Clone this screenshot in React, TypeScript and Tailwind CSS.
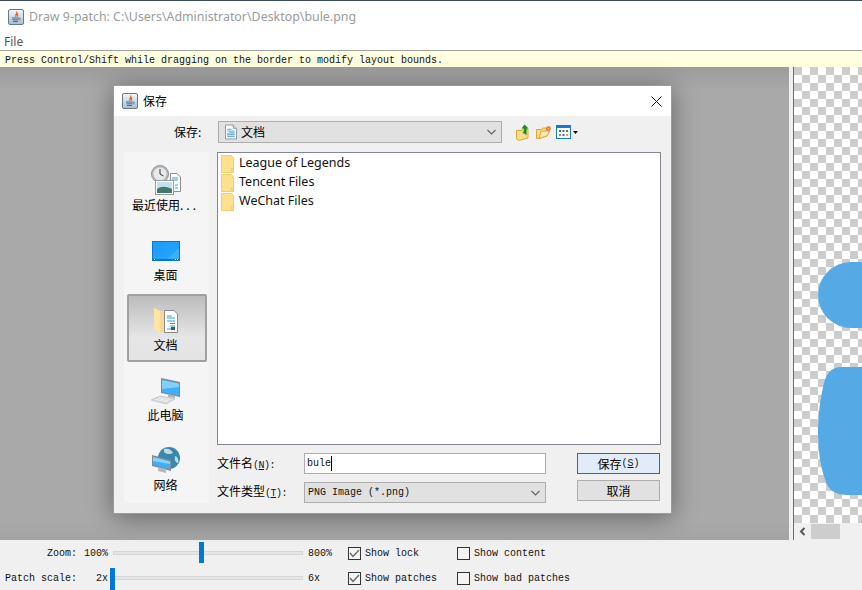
import React from "react";

const mono = "font-['Liberation_Mono',monospace] text-[10px] text-[#111]";
const cjk = "font-['Noto_Sans_CJK_SC','Noto_Sans',sans-serif] text-[12px] text-black";

function JavaIcon() {
  return (
    <svg width="16" height="16" viewBox="0 0 16 16">
      <defs>
        <linearGradient id="javaBg" x1="0" y1="0" x2="0" y2="1">
          <stop offset="0" stopColor="#f4f7fa" />
          <stop offset="1" stopColor="#a9bdd0" />
        </linearGradient>
      </defs>
      <rect x="0.5" y="0.5" width="15" height="15" rx="1.5" fill="url(#javaBg)" stroke="#66788c" />
      <path d="M8.5 2.5C10 4.5 6.5 5.5 8 8M10 4.5C9 5.5 9 6.5 10 7.5" fill="none" stroke="#e0661c" strokeWidth="1.2" />
      <path d="M4 9h7M4.5 10.8h6M5 12.5h5" stroke="#3a6ea5" strokeWidth="1" />
      <path d="M11 9.2c2 -.4 2 1.6 0 1.8" fill="none" stroke="#3a6ea5" strokeWidth=".8" />
    </svg>
  );
}

function DocIcon() {
  return (
    <svg width="12" height="16" viewBox="0 0 13 16">
      <path d="M.5.5H9L12.5 4V15.5H.5Z" fill="#fff" stroke="#8a8f96" />
      <path d="M9 .5V4H12.5" fill="#dfe3e8" stroke="#8a8f96" />
      <path d="M2.5 5H7M2.5 7H10.5M2.5 13H10.5" stroke="#2f9fdc" />
      <path d="M4.5 9H10.5M4.5 11H10.5" stroke="#2f7fb0" />
      <rect x="2.5" y="9" width="1.5" height="3" fill="#5a9fc8" />
    </svg>
  );
}

function FileFolder() {
  return (
    <svg width="13" height="18" viewBox="0 0 13 18">
      <path d="M.5 .5H10.5L12.5 3V13.5H10.5V17.5H.5Z" fill="#fde08e" stroke="#f0cf74" />
      <path d="M10.5 13.5H12.5V17.5H10.5Z" fill="#f7d87f" stroke="#f0cf74" />
    </svg>
  );
}

function ToolIcons() {
  return (
    <div className="flex items-center ml-[14px]">
      <svg width="15" height="17" viewBox="0 0 15 17">
        <path d="M.5 6.5H6L6.5 5H12V14L3 16.5L.5 15Z" fill="#f8dc86" stroke="#d6a83a" />
        <path d="M8.5 .5L12.5 4.5H10.5V11.5C9.5 10 8 9 6.5 9C8 8 8 6 8 4.5H5.5Z" fill="#1b8a1f" />
      </svg>
      <svg className="ml-[5px]" width="16" height="13" viewBox="0 0 16 13">
        <path d="M.5 3.5H5.5L6.5 2H11V10L3 12.5H.5Z" fill="#f8dc86" stroke="#d6a83a" />
        <path d="M11 10L14 5H5L3 12.5Z" fill="#fbe7a6" stroke="#d6a83a" />
        <circle cx="12.5" cy="2.5" r="2.3" fill="#f0603a" />
        <circle cx="12.5" cy="2.5" r="1" fill="#fbd15e" />
      </svg>
      <svg className="ml-[4px]" width="15" height="14" viewBox="0 0 15 14">
        <rect x=".5" y=".5" width="14" height="13" fill="#fff" stroke="#1979ca" />
        <rect x="0" y="0" width="15" height="3" fill="#1979ca" />
        <rect x="3" y="5" width="2" height="2" fill="#1979ca" />
        <rect x="6.5" y="5" width="2" height="2" fill="#666" />
        <rect x="10" y="5" width="2" height="2" fill="#2c9a3c" />
        <rect x="3" y="9" width="2" height="2" fill="#e8722c" />
        <rect x="6.5" y="9" width="2" height="2" fill="#1979ca" />
        <rect x="10" y="9" width="2" height="2" fill="#e0a82c" />
      </svg>
      <svg className="ml-[2px]" width="5" height="3" viewBox="0 0 5 3">
        <path d="M0 0H5L2.5 3Z" fill="#111" />
      </svg>
    </div>
  );
}

function Chevron() {
  return (
    <svg width="9" height="6" viewBox="0 0 9 6" className="shrink-0">
      <path d="M.5 1L4.5 5L8.5 1" fill="none" stroke="#606060" strokeWidth="1.1" />
    </svg>
  );
}

function RecentIcon() {
  return (
    <svg width="30" height="30" viewBox="0 0 30 30">
      <circle cx="9" cy="9" r="8.5" fill="#b9bdc0" stroke="#8c9094" />
      <circle cx="9" cy="9" r="6.5" fill="#e8e9ea" />
      <path d="M9 4V9L12.5 11" fill="none" stroke="#333" strokeWidth="1" />
      <path d="M19.5 8.500H26L29.500 12V26.500H19.500Z" fill="#fff" stroke="#8a8f96" />
      <path d="M21 13H27M21 15H27M24 20H27M24 23H27" stroke="#2f9fdc" />
      <rect x="4.500" y="15.500" width="18" height="14" fill="#fff" stroke="#9a9a9a" />
      <rect x="6" y="17" width="15" height="11" fill="#bfe0ee" />
      <path d="M6 24C10 21 14 21 21 24V28H6Z" fill="#3f7a6a" />
    </svg>
  );
}

function DesktopIcon() {
  return (
    <svg width="28" height="20" viewBox="0 0 28 20">
      <defs>
        <linearGradient id="deskBg" x1="0" y1="0" x2="1" y2="1">
          <stop offset="0" stopColor="#1a9bff" />
          <stop offset="1" stopColor="#27a5ff" />
        </linearGradient>
      </defs>
      <rect x=".5" y=".5" width="27" height="19" fill="url(#deskBg)" stroke="#0a78c4" />
      <path d="M14 19L27 7V19Z" fill="#4cb6ff" opacity=".6" />
      <rect x="1" y="18" width="26" height="1" fill="#0e6fb3" />
      <path d="M2 18.500H3M23 18.500H24M25 18.500H26" stroke="#fff" />
    </svg>
  );
}

function DocsIcon() {
  return (
    <svg width="24" height="27" viewBox="0 0 24 27">
      <path d="M0 0L6 3H16V24H7L0 20Z" fill="#f7da95" />
      <path d="M0 0L6 3V27L0 21Z" fill="#fbe6a8" />
      <path d="M10.500 2.500H20L23.500 6V24.500H10.500Z" fill="#fff" stroke="#85898f" />
      <path d="M13 8H18M13 10H21M13 13H21M16 15.500H21M16 18H21M13 21H21" stroke="#2f9fdc" />
      <rect x="17" y="19" width="4" height="3" fill="#555" />
    </svg>
  );
}

function PcIcon() {
  return (
    <svg width="30" height="27" viewBox="0 0 30 27">
      <path d="M10 0L29 4V19L10 15Z" fill="#7d8a94" />
      <path d="M11 2L28 5.500V17.500L11 14Z" fill="#3fb0f8" />
      <path d="M11 2L28 5.500V9L11 11Z" fill="#7fd0fc" />
      <path d="M17 16L24 17.500V20L17 19Z" fill="#aab2b8" />
      <path d="M0 22L9 18L24 21L15 26Z" fill="#d5d9dc" stroke="#b4b8bc" strokeWidth=".6" />
      <path d="M4 21.500L16 24M6 20.500L18 23M8 19.500L20 22" stroke="#f4f5f6" strokeWidth=".7" />
    </svg>
  );
}

function NetIcon() {
  return (
    <svg width="28" height="28" viewBox="0 0 28 28">
      <circle cx="17" cy="11" r="11" fill="#3b86ad" />
      <path d="M12 2C16 1 20 3 21 6C18 8 14 7 12 5ZM23 9C26 10 27 13 26 16C24 16 22 13 23 9Z" fill="#bcdcec" />
      <path d="M0 8L19 13V24L0 19Z" fill="#7d8a94" />
      <path d="M1 10L18 14.500V22L1 17.500Z" fill="#3fb0f8" />
      <path d="M1 10L18 14.500V17L1 14Z" fill="#86d3fc" />
      <path d="M6 20L14 22V26L6 24Z" fill="#b4bac0" />
    </svg>
  );
}

function SideItem({ icon, label, selected, iconClass }: { icon: React.ReactNode; label: React.ReactNode; selected?: boolean; iconClass: string }) {
  return (
    <div className="relative h-[70px] flex justify-center pr-[2px]">
      {selected && (
        <div className="absolute left-[3px] right-[2px] top-[0px] h-[68px] rounded-[2px] border-2 border-[#a0a0a0] bg-[linear-gradient(#bcbcbc,#e6e6e6_65%,#e4e4e4)]" />
      )}
      <div className={"relative flex flex-col items-center " + iconClass}>
        {icon}
      </div>
      <span className={"absolute top-[42px] whitespace-nowrap leading-[18px] " + cjk}>{label}</span>
    </div>
  );
}

function Check({ on }: { on?: boolean }) {
  return (
    <span className="w-[13px] h-[13px] border border-[#333] bg-[#f4f4f4] flex items-center justify-center shrink-0">
      {on && (
        <svg width="11" height="9" viewBox="0 0 11 9">
          <path d="M1 4L4 7.500L10 1" fill="none" stroke="#666" strokeWidth="1.3" />
        </svg>
      )}
    </span>
  );
}

function Option({ on, label, className }: { on?: boolean; label: string; className: string }) {
  return (
    <div className={"flex items-center gap-[4px] pt-[2px] " + className}>
      <Check on={on} />
      <span className={mono}>{label}</span>
    </div>
  );
}

function Slider({ thumbLeft, thumbClass }: { thumbLeft: number; thumbClass: string }) {
  return (
    <div className="relative w-[190px] h-full flex items-center">
      <div className="w-full h-[4px] bg-[#e6e6e6] border border-[#d6d6d6]" />
      <div className={"absolute w-[5px] bg-[#0078d7] " + thumbClass} style={{ left: thumbLeft }} />
    </div>
  );
}

export default function App() {
  return (
    <div className="relative w-[862px] h-[590px] overflow-hidden flex flex-col bg-[#f0f0f0]">
      <div className="h-[33px] bg-white border-t border-[#3c4a55] flex items-center pl-[8px] gap-[5px] shrink-0">
        <JavaIcon />
        <span className="font-['Noto_Sans',sans-serif] text-[12.4px] text-[#9b9b9b]">Draw 9-patch: C:\Users\Administrator\Desktop\bule.png</span>
      </div>
      <div className="h-[17px] bg-white pl-[4px] flex items-center shrink-0">
        <span className="font-['Noto_Sans',sans-serif] text-[12px] text-[#555]">File</span>
      </div>
      <div className="h-[17px] bg-[#ffffe0] border-t border-[#a0a0a0] pl-[5px] pt-[2px] flex items-center shrink-0">
        <span className={mono}>Press Control/Shift while dragging on the border to modify layout bounds.</span>
      </div>

      <div className="h-[473px] flex shrink-0">
        <div className="w-[789px] bg-[linear-gradient(#9c9c9c,#a9a9a9_5%,#a9a9a9_96%,#a4a4a4)]" />
        <div className="w-[4px] bg-[#f0f0f0] border-r border-[#6e6e6e] box-content" />
        <div className="flex-1 flex flex-col">
          <div className="relative flex-1 overflow-hidden bg-[repeating-conic-gradient(#ffffff_0_25%,#cccccc_0_50%)] bg-[length:16px_16px]">
            <div className="absolute left-[24px] top-[195px] w-[60px] h-[66px] bg-[#55a9e4] rounded-l-[33px]" />
            <svg className="absolute left-[24px] top-[300px]" width="45" height="128" viewBox="0 0 45 128">
              <path d="M45 0H24C12 0 8 8 6 16C2 32 0 50 0 64C0 82 2 98 7 112C10 124 18 128 30 128H45Z" fill="#55a9e4" />
            </svg>
          </div>
          <div className="h-[17px] bg-[#f0f0f0] flex items-center shrink-0">
            <svg className="ml-[5px]" width="7" height="9" viewBox="0 0 7 9">
              <path d="M5.500 1L2 4.500L5.500 8" fill="none" stroke="#555" strokeWidth="2" />
            </svg>
            <div className="ml-[5px] w-[29px] h-[15px] bg-[#cdcdcd]" />
          </div>
        </div>
      </div>

      <div className="flex-1 flex flex-col">
        <div className="h-[25px] flex items-center relative">
          <span className={"w-[84px] pl-[47px] pt-[2px] " + mono}>Zoom:</span>
          <span className={"w-[29px] pt-[2px] " + mono}>100%</span>
          <div className="h-[25px]"><Slider thumbLeft={86} thumbClass="top-[2px] h-[21px]" /></div>
          <span className={"w-[45px] pl-[5px] pt-[2px] " + mono}>800%</span>
          <Option on label="Show lock" className="w-[109px]" />
          <Option label="Show content" className="" />
        </div>
        <div className="h-[25px] flex items-center relative">
          <span className={"w-[96px] pl-[5px] pt-[2px] " + mono}>Patch scale:</span>
          <span className={"w-[17px] pt-[2px] " + mono}>2x</span>
          <div className="h-[25px]"><Slider thumbLeft={-3} thumbClass="top-[3px] h-[22px]" /></div>
          <span className={"w-[45px] pl-[5px] pt-[2px] " + mono}>6x</span>
          <Option on label="Show patches" className="w-[109px]" />
          <Option label="Show bad patches" className="" />
        </div>
      </div>

      <div className="absolute left-[113px] top-[85px] w-[559px] h-[429px] border border-[#e08e2b] bg-[#f0f0f0] shadow-[0_3px_24px_rgba(0,0,0,0.42)] flex flex-col">
        <div className="h-[30px] bg-white flex items-center pl-[8px] shrink-0">
          <JavaIcon />
          <span className={"ml-[5px] " + cjk}>保存</span>
          <svg className="ml-auto mr-[9px]" width="11" height="11" viewBox="0 0 11 11">
            <path d="M.5 .5L10.500 10.500M10.500 .5L.5 10.500" stroke="#111" strokeWidth="1" />
          </svg>
        </div>
        <div className="flex items-center h-[22px] mt-[5px] pl-[60px] shrink-0">
          <span className={"w-[44px] " + cjk}>保存:</span>
          <div className="w-[284px] h-[22px] border border-[#adadad] bg-[#e1e1e1] flex items-center pl-[6px] pr-[5px]">
            <DocIcon />
            <span className={"ml-[4px] " + cjk}>文档</span>
            <span className="ml-auto"><Chevron /></span>
          </div>
          <ToolIcons />
        </div>
        <div className="flex mt-[9px] pl-[10px] gap-[8px]">
          <div className="w-[85px] h-[351px] bg-[#f5f5f5] pt-[2px] overflow-hidden">
            <SideItem icon={<RecentIcon />} label={<>最近使用<span className="tracking-[3px]">...</span></>} iconClass="mt-[11px]" />
            <SideItem icon={<DesktopIcon />} label="桌面" iconClass="mt-[17px]" />
            <SideItem icon={<DocsIcon />} label="文档" selected iconClass="mt-[14px]" />
            <SideItem icon={<PcIcon />} label="此电脑" iconClass="mt-[14px]" />
            <SideItem icon={<NetIcon />} label="网络" iconClass="mt-[13px]" />
          </div>
          <div className="w-[444px]">
            <div className="h-[293px] border border-[#828790] bg-white pl-[3px] pt-px flex flex-col">
              {["League of Legends", "Tencent Files", "WeChat Files"].map((name) => (
                <div key={name} className="h-[19px] flex items-center gap-[5px]">
                  <FileFolder />
                  <span className="font-['Noto_Sans',sans-serif] text-[12.500px] text-[#111]">{name}</span>
                </div>
              ))}
            </div>
            <div className="flex mt-[8px]">
              <div className="w-[360px] flex flex-col">
                <div className="flex items-center h-[21px]">
                  <span className={"w-[87px] whitespace-nowrap " + cjk}>
                    文件名<span className={"tracking-[-0.5px] " + mono}>(<span className="underline">N</span>):</span>
                  </span>
                  <div className="w-[242px] h-[21px] border border-[#adadad] bg-white flex items-center pl-[2px]">
                    <span className={mono}>bule</span>
                    <span className="w-px h-[15px] bg-black" />
                  </div>
                </div>
                <div className="flex items-center h-[21px] mt-[8px]">
                  <span className={"w-[87px] whitespace-nowrap pb-[3px] " + cjk}>
                    文件类型<span className={"tracking-[-0.5px] " + mono}>(<span className="underline">T</span>):</span>
                  </span>
                  <div className="w-[242px] h-[21px] border border-[#adadad] bg-[#e1e1e1] flex items-center pl-[3px] pr-[5px]">
                    <span className={mono}>PNG Image (*.png)</span>
                    <span className="ml-auto"><Chevron /></span>
                  </div>
                </div>
              </div>
              <div className="flex flex-col w-[83px]">
                <div className={"h-[21px] border border-[#0078d7] bg-[#e1ecf8] flex items-center justify-center " + cjk}>
                  保存<span className={mono}>(<span className="underline">S</span>)</span>
                </div>
                <div className={"h-[21px] mt-[6px] border border-[#adadad] bg-[#e1e1e1] flex items-center justify-center " + cjk}>取消</div>
              </div>
            </div>
          </div>
        </div>
      </div>
    </div>
  );
}
